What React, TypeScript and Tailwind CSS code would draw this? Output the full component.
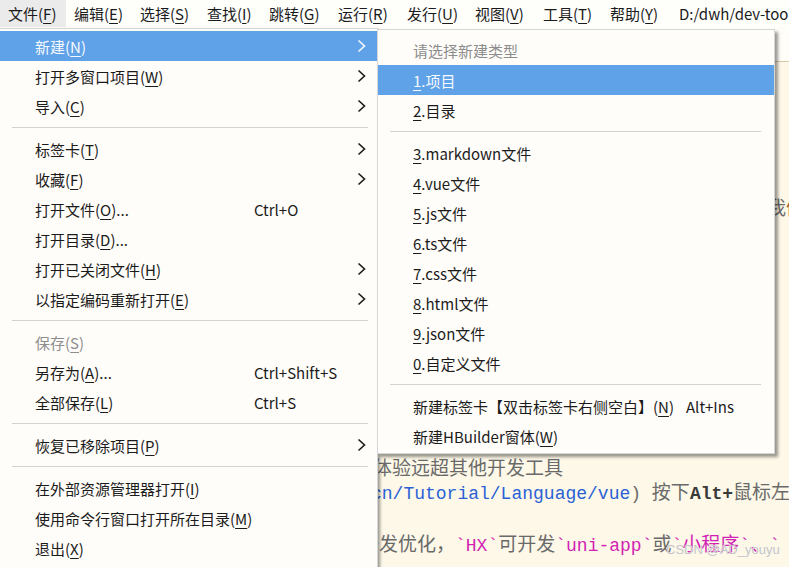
import React from "react";

type Entry =
  | { t: "sep" }
  | { t: "head"; label: string }
  | {
      t: "item";
      label: string;
      k?: string;
      num?: string;
      tail?: string;
      sc?: string;
      sub?: boolean;
      dis?: boolean;
      active?: boolean;
    };

const menuBar = [
  { label: "文件", k: "F", w: "w-[66px]", hover: true },
  { label: "编辑", k: "E", w: "w-[66px]" },
  { label: "选择", k: "S", w: "w-[67px]" },
  { label: "查找", k: "I", w: "w-[62px]" },
  { label: "跳转", k: "G", w: "w-[69px]" },
  { label: "运行", k: "R", w: "w-[69px]" },
  { label: "发行", k: "U", w: "w-[68px]" },
  { label: "视图", k: "V", w: "w-[68px]" },
  { label: "工具", k: "T", w: "w-[67px]" },
  { label: "帮助", k: "Y", w: "w-[67px]" },
];

const fileMenu: Entry[] = [
  { t: "item", label: "新建", k: "N", sub: true, active: true },
  { t: "item", label: "打开多窗口项目", k: "W", sub: true },
  { t: "item", label: "导入", k: "C", sub: true },
  { t: "sep" },
  { t: "item", label: "标签卡", k: "T", sub: true },
  { t: "item", label: "收藏", k: "F", sub: true },
  { t: "item", label: "打开文件", k: "O", tail: "...", sc: "Ctrl+O" },
  { t: "item", label: "打开目录", k: "D", tail: "..." },
  { t: "item", label: "打开已关闭文件", k: "H", sub: true },
  { t: "item", label: "以指定编码重新打开", k: "E", sub: true },
  { t: "sep" },
  { t: "item", label: "保存", k: "S", dis: true },
  { t: "item", label: "另存为", k: "A", tail: "...", sc: "Ctrl+Shift+S" },
  { t: "item", label: "全部保存", k: "L", sc: "Ctrl+S" },
  { t: "sep" },
  { t: "item", label: "恢复已移除项目", k: "P", sub: true },
  { t: "sep" },
  { t: "item", label: "在外部资源管理器打开", k: "I" },
  { t: "item", label: "使用命令行窗口打开所在目录", k: "M" },
  { t: "item", label: "退出", k: "X" },
];

const newMenu: Entry[] = [
  { t: "head", label: "请选择新建类型" },
  { t: "item", num: "1", label: ".项目", active: true },
  { t: "item", num: "2", label: ".目录" },
  { t: "sep" },
  { t: "item", num: "3", label: ".markdown文件" },
  { t: "item", num: "4", label: ".vue文件" },
  { t: "item", num: "5", label: ".js文件" },
  { t: "item", num: "6", label: ".ts文件" },
  { t: "item", num: "7", label: ".css文件" },
  { t: "item", num: "8", label: ".html文件" },
  { t: "item", num: "9", label: ".json文件" },
  { t: "item", num: "0", label: ".自定义文件" },
  { t: "sep" },
  { t: "item", label: "新建标签卡【双击标签卡右侧空白】", k: "N", sc: "Alt+Ins" },
  { t: "item", label: "新建HBuilder窗体", k: "W" },
];

function Chevron() {
  return (
    <svg width="9" height="14" viewBox="0 0 9 14" className="ml-auto">
      <polyline points="1.5,1.5 7.5,7 1.5,12.5" fill="none" stroke="currentColor" strokeWidth="1.6" />
    </svg>
  );
}

function Label({ e }: { e: Extract<Entry, { t: "item" }> }) {
  return (
    <>
      {e.num && <span className="underline underline-offset-[3px]">{e.num}</span>}
      {e.label}
      {e.k && (
        <>
          (<span className="underline underline-offset-[3px]">{e.k}</span>)
        </>
      )}
      {e.tail}
    </>
  );
}

function Menu({ entries, labelW, sepCls }: { entries: Entry[]; labelW: string; sepCls: string }) {
  return (
    <>
      {entries.map((e, i) => {
        if (e.t === "sep") return <div key={i} className={"h-px my-[6px] bg-[#d2d2d2] " + sepCls} />;
        if (e.t === "head")
          return (
            <div key={i} className="h-[30px] flex items-center pl-[35px] text-[#8c8c8c]">
              {e.label}
            </div>
          );
        const color = e.active ? "bg-[#5fa2e8] text-[#f6f9fd]" : e.dis ? "text-[#8e8e8e]" : "text-[#1b1b1b]";
        return (
          <div key={i} className={"h-[30px] flex items-center pl-[35px] pr-[11px] whitespace-nowrap " + color}>
            {e.sc ? (
              <span className={"shrink-0 " + labelW}>
                <Label e={e} />
              </span>
            ) : (
              <span>
                <Label e={e} />
              </span>
            )}
            {e.sc && <span>{e.sc}</span>}
            {e.sub && <Chevron />}
          </div>
        );
      })}
    </>
  );
}

export default function App() {
  const lines = Array.from({ length: 19 }, (_, k) => k);
  return (
    <div className="relative w-[789px] h-[567px] overflow-hidden bg-[#fdf8e8] font-['Microsoft_YaHei','Noto_Sans_CJK_SC',sans-serif] text-[15px] leading-none">
      {/* menu bar */}
      <div className="h-[28px] flex items-start bg-[#fefefb] text-[#1b1b1b] whitespace-nowrap">
        {menuBar.map((m) => (
          <div key={m.label} className={"h-[27px] flex items-center pl-[8px] shrink-0 " + m.w + (m.hover ? " bg-[#ebebeb]" : "")}>
            {m.label}(<span className="underline underline-offset-[3px]">{m.k}</span>)
          </div>
        ))}
        <div className="h-[27px] flex items-center pl-[10px]">D:/dwh/dev-tools/hbuilderx</div>
      </div>

      {/* tab strip */}
      <div className="h-[34px] bg-[#fffdf7] border-b border-[#dacba4]" />

      {/* editor */}
      <div className="pt-[1px] text-[19px] text-[#6a6a6a] whitespace-nowrap">
        {lines.map((k) => (
          <div key={k} className="h-[26px] flex items-center">
            {k === 5 && (
              <span className="pl-[767px]">
                我<span className="text-[#a0522d]">们</span>
              </span>
            )}
            {k === 15 && <span className="pl-[373px]">体验远超其他开发工具</span>}
            {k === 16 && (
              <span className="pl-[371px]">
                <span className="font-['Liberation_Mono',monospace] text-[18px] text-[#2a62d6]">cn/Tutorial/Language/vue</span>
                <span className="font-['Liberation_Mono',monospace] text-[18px]">) </span>按下
                <span className="font-['Liberation_Mono',monospace] text-[18px] font-bold text-[#3a3a3a]">Alt+</span>鼠标左键
              </span>
            )}
            {k === 18 && (
              <span className="pl-[360px]">
                开发优化，
                <span className="font-['Liberation_Mono',monospace] text-[18px] text-[#d21fb4]">`HX`</span>可开发
                <span className="font-['Liberation_Mono',monospace] text-[18px] text-[#d21fb4]">`uni-app`</span>或
                <span className="text-[#d21fb4]">
                  <span className="font-['Liberation_Mono',monospace] text-[18px]">`</span>小程序
                  <span className="font-['Liberation_Mono',monospace] text-[18px]">`</span>、
                  <span className="font-['Liberation_Mono',monospace] text-[18px]">`</span>
                </span>
              </span>
            )}
          </div>
        ))}
      </div>

      {/* watermark */}
      <div className="absolute left-[666px] top-[543px] text-[13px] text-[#c4c4c4] font-['Liberation_Sans',sans-serif] [text-shadow:0_0_1px_#ffffff]">
        CSDN @AD_youyu
      </div>

      {/* 文件 menu */}
      <div className="absolute left-0 top-[28px] w-[378px] h-[560px] pt-[2px] bg-[#fffdf9] border-t border-r border-[#d6d6d6] shadow-[2px_2px_3px_rgba(0,0,0,0.4)]">
        <Menu entries={fileMenu} labelW="w-[219px]" sepCls="ml-[12px] mr-[9px]" />
      </div>

      {/* 新建 submenu */}
      <div className="absolute left-[377px] top-[29px] w-[398px] pt-[5px] pb-[2px] bg-[#fffdf9] border border-[#d6d6d6] shadow-[3px_3px_3px_rgba(0,0,0,0.4)]">
        <Menu entries={newMenu} labelW="w-[273px]" sepCls="ml-[12px] mr-[13px]" />
      </div>
    </div>
  );
}
